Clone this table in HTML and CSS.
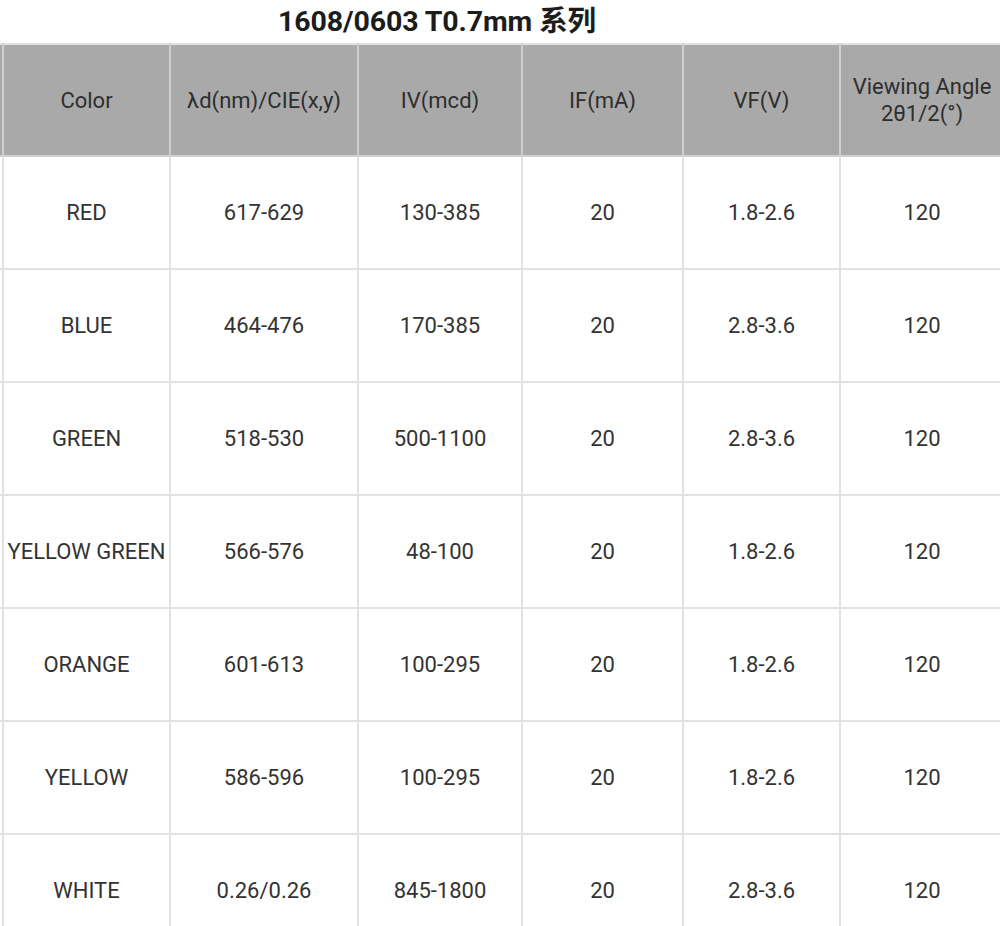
FILE: index.html
```html
<!DOCTYPE html>
<html lang="zh">
<head>
<meta charset="utf-8">
<title>1608/0603 T0.7mm 系列</title>
<link rel="stylesheet" href="styles.css">
</head>
<body>
<div class="page">
  <h1 class="title">1608/0603 T0.7mm 系列</h1>
  <table class="spec">
    <colgroup>
      <col class="c-sliver">
      <col class="c-color">
      <col class="c-wave">
      <col class="c-iv">
      <col class="c-if">
      <col class="c-vf">
      <col class="c-angle">
    </colgroup>
    <thead>
      <tr>
        <th></th>
        <th>Color</th>
        <th>λd(nm)/CIE(x,y)</th>
        <th>IV(mcd)</th>
        <th>IF(mA)</th>
        <th>VF(V)</th>
        <th>Viewing Angle<br>2θ1/2(°)</th>
      </tr>
    </thead>
    <tbody>
      <tr><td></td><td>RED</td><td>617-629</td><td>130-385</td><td>20</td><td>1.8-2.6</td><td>120</td></tr>
      <tr><td></td><td>BLUE</td><td>464-476</td><td>170-385</td><td>20</td><td>2.8-3.6</td><td>120</td></tr>
      <tr><td></td><td>GREEN</td><td>518-530</td><td>500-1100</td><td>20</td><td>2.8-3.6</td><td>120</td></tr>
      <tr><td></td><td>YELLOW GREEN</td><td>566-576</td><td>48-100</td><td>20</td><td>1.8-2.6</td><td>120</td></tr>
      <tr><td></td><td>ORANGE</td><td>601-613</td><td>100-295</td><td>20</td><td>1.8-2.6</td><td>120</td></tr>
      <tr><td></td><td>YELLOW</td><td>586-596</td><td>100-295</td><td>20</td><td>1.8-2.6</td><td>120</td></tr>
      <tr><td></td><td>WHITE</td><td>0.26/0.26</td><td>845-1800</td><td>20</td><td>2.8-3.6</td><td>120</td></tr>
    </tbody>
  </table>
</div>
</body>
</html>
```

FILE: styles.css
```css
html, body {
  margin: 0;
  padding: 0;
  background: #ffffff;
  overflow: hidden;
}

.page {
  width: 1010px;
  font-family: Roboto, "Noto Sans CJK SC", sans-serif;
  color: #333333;
}

.title {
  margin: 0;
  height: 43px;
  line-height: 44px;
  font-size: 28.5px;
  font-weight: 700;
  color: #1c1c1c;
  padding-right: 136px;
  text-align: center;
  letter-spacing: -0.1px;
}

.spec {
  border-collapse: collapse;
  table-layout: fixed;
  width: 1006px;
  margin-left: -3px;
  font-size: 22px;
}

.c-sliver { width: 5px; }
.c-color { width: 167px; }
.c-wave { width: 188px; }
.c-iv { width: 164px; }
.c-if { width: 161px; }
.c-vf { width: 157px; }
.c-angle { width: 164px; }

.spec th,
.spec td {
  border: 2px solid #e2e2e2;
  text-align: center;
  vertical-align: middle;
  padding: 0;
  white-space: nowrap;
}

.spec th {
  background: #a9a9a9;
  font-weight: 400;
  height: 110px;
  line-height: 27px;
  color: #2e2e2e;
  border-color: #cfcfcf;
}

.spec thead tr th {
  border-top-color: #e2e2e2;
}

.spec td {
  height: 111px;
  color: #333333;
}
```
